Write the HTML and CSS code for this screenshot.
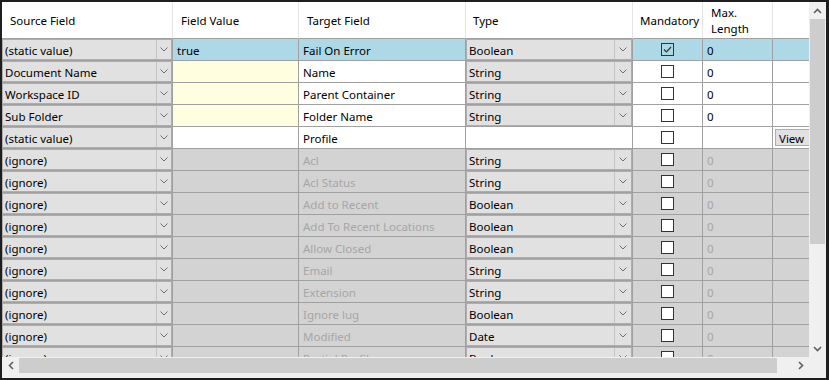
FILE: index.html
```html
<!DOCTYPE html>
<html lang="en">
<head>
  <meta charset="UTF-8">
  <title>Field Mapping</title>
  <link rel="stylesheet" href="styles.css">
</head>
<body>
  <div class="frame">
    <!-- grid area -->
    <div class="viewport">
      <div class="row head">
        <div class="cell">Source Field</div>
        <div class="cell">Field Value</div>
        <div class="cell">Target Field</div>
        <div class="cell">Type</div>
        <div class="cell">Mandatory</div>
        <div class="cell two-lines">Max.<br>Length</div>
        <div class="cell"></div>
      </div>

      <div class="row selected">
        <div class="cell combo-cell"><div class="combo"><span class="val">(static value)</span><span class="btn"><svg width="8" height="5"><polyline points="0.5,0.5 4,4 7.5,0.5"/></svg></span></div></div>
        <div class="cell">true</div>
        <div class="cell">Fail On Error</div>
        <div class="cell combo-cell"><div class="combo"><span class="val">Boolean</span><span class="btn"><svg width="8" height="5"><polyline points="0.5,0.5 4,4 7.5,0.5"/></svg></span></div></div>
        <div class="cell check-cell"><span class="check on"><svg width="11" height="11"><polyline points="2,5.5 4.5,8 9,3"/></svg></span></div>
        <div class="cell">0</div>
        <div class="cell"></div>
      </div>

      <div class="row">
        <div class="cell combo-cell"><div class="combo"><span class="val">Document Name</span><span class="btn"><svg width="8" height="5"><polyline points="0.5,0.5 4,4 7.5,0.5"/></svg></span></div></div>
        <div class="cell value-cell"></div>
        <div class="cell">Name</div>
        <div class="cell combo-cell"><div class="combo"><span class="val">String</span><span class="btn"><svg width="8" height="5"><polyline points="0.5,0.5 4,4 7.5,0.5"/></svg></span></div></div>
        <div class="cell check-cell"><span class="check"></span></div>
        <div class="cell">0</div>
        <div class="cell"></div>
      </div>

      <div class="row">
        <div class="cell combo-cell"><div class="combo"><span class="val">Workspace ID</span><span class="btn"><svg width="8" height="5"><polyline points="0.5,0.5 4,4 7.5,0.5"/></svg></span></div></div>
        <div class="cell value-cell"></div>
        <div class="cell">Parent Container</div>
        <div class="cell combo-cell"><div class="combo"><span class="val">String</span><span class="btn"><svg width="8" height="5"><polyline points="0.5,0.5 4,4 7.5,0.5"/></svg></span></div></div>
        <div class="cell check-cell"><span class="check"></span></div>
        <div class="cell">0</div>
        <div class="cell"></div>
      </div>

      <div class="row">
        <div class="cell combo-cell"><div class="combo"><span class="val">Sub Folder</span><span class="btn"><svg width="8" height="5"><polyline points="0.5,0.5 4,4 7.5,0.5"/></svg></span></div></div>
        <div class="cell value-cell"></div>
        <div class="cell">Folder Name</div>
        <div class="cell combo-cell"><div class="combo"><span class="val">String</span><span class="btn"><svg width="8" height="5"><polyline points="0.5,0.5 4,4 7.5,0.5"/></svg></span></div></div>
        <div class="cell check-cell"><span class="check"></span></div>
        <div class="cell">0</div>
        <div class="cell"></div>
      </div>

      <div class="row">
        <div class="cell combo-cell"><div class="combo"><span class="val">(static value)</span><span class="btn"><svg width="8" height="5"><polyline points="0.5,0.5 4,4 7.5,0.5"/></svg></span></div></div>
        <div class="cell"></div>
        <div class="cell">Profile</div>
        <div class="cell"></div>
        <div class="cell check-cell"><span class="check"></span></div>
        <div class="cell"></div>
        <div class="cell button-cell"><span class="view-btn">View</span></div>
      </div>

      <div class="row off">
        <div class="cell combo-cell"><div class="combo"><span class="val">(ignore)</span><span class="btn"><svg width="8" height="5"><polyline points="0.5,0.5 4,4 7.5,0.5"/></svg></span></div></div>
        <div class="cell"></div>
        <div class="cell">Acl</div>
        <div class="cell combo-cell"><div class="combo"><span class="val">String</span><span class="btn"><svg width="8" height="5"><polyline points="0.5,0.5 4,4 7.5,0.5"/></svg></span></div></div>
        <div class="cell check-cell"><span class="check"></span></div>
        <div class="cell">0</div>
        <div class="cell"></div>
      </div>

      <div class="row off">
        <div class="cell combo-cell"><div class="combo"><span class="val">(ignore)</span><span class="btn"><svg width="8" height="5"><polyline points="0.5,0.5 4,4 7.5,0.5"/></svg></span></div></div>
        <div class="cell"></div>
        <div class="cell">Acl Status</div>
        <div class="cell combo-cell"><div class="combo"><span class="val">String</span><span class="btn"><svg width="8" height="5"><polyline points="0.5,0.5 4,4 7.5,0.5"/></svg></span></div></div>
        <div class="cell check-cell"><span class="check"></span></div>
        <div class="cell">0</div>
        <div class="cell"></div>
      </div>

      <div class="row off">
        <div class="cell combo-cell"><div class="combo"><span class="val">(ignore)</span><span class="btn"><svg width="8" height="5"><polyline points="0.5,0.5 4,4 7.5,0.5"/></svg></span></div></div>
        <div class="cell"></div>
        <div class="cell">Add to Recent</div>
        <div class="cell combo-cell"><div class="combo"><span class="val">Boolean</span><span class="btn"><svg width="8" height="5"><polyline points="0.5,0.5 4,4 7.5,0.5"/></svg></span></div></div>
        <div class="cell check-cell"><span class="check"></span></div>
        <div class="cell">0</div>
        <div class="cell"></div>
      </div>

      <div class="row off">
        <div class="cell combo-cell"><div class="combo"><span class="val">(ignore)</span><span class="btn"><svg width="8" height="5"><polyline points="0.5,0.5 4,4 7.5,0.5"/></svg></span></div></div>
        <div class="cell"></div>
        <div class="cell">Add To Recent Locations</div>
        <div class="cell combo-cell"><div class="combo"><span class="val">Boolean</span><span class="btn"><svg width="8" height="5"><polyline points="0.5,0.5 4,4 7.5,0.5"/></svg></span></div></div>
        <div class="cell check-cell"><span class="check"></span></div>
        <div class="cell">0</div>
        <div class="cell"></div>
      </div>

      <div class="row off">
        <div class="cell combo-cell"><div class="combo"><span class="val">(ignore)</span><span class="btn"><svg width="8" height="5"><polyline points="0.5,0.5 4,4 7.5,0.5"/></svg></span></div></div>
        <div class="cell"></div>
        <div class="cell">Allow Closed</div>
        <div class="cell combo-cell"><div class="combo"><span class="val">Boolean</span><span class="btn"><svg width="8" height="5"><polyline points="0.5,0.5 4,4 7.5,0.5"/></svg></span></div></div>
        <div class="cell check-cell"><span class="check"></span></div>
        <div class="cell">0</div>
        <div class="cell"></div>
      </div>

      <div class="row off">
        <div class="cell combo-cell"><div class="combo"><span class="val">(ignore)</span><span class="btn"><svg width="8" height="5"><polyline points="0.5,0.5 4,4 7.5,0.5"/></svg></span></div></div>
        <div class="cell"></div>
        <div class="cell">Email</div>
        <div class="cell combo-cell"><div class="combo"><span class="val">String</span><span class="btn"><svg width="8" height="5"><polyline points="0.5,0.5 4,4 7.5,0.5"/></svg></span></div></div>
        <div class="cell check-cell"><span class="check"></span></div>
        <div class="cell">0</div>
        <div class="cell"></div>
      </div>

      <div class="row off">
        <div class="cell combo-cell"><div class="combo"><span class="val">(ignore)</span><span class="btn"><svg width="8" height="5"><polyline points="0.5,0.5 4,4 7.5,0.5"/></svg></span></div></div>
        <div class="cell"></div>
        <div class="cell">Extension</div>
        <div class="cell combo-cell"><div class="combo"><span class="val">String</span><span class="btn"><svg width="8" height="5"><polyline points="0.5,0.5 4,4 7.5,0.5"/></svg></span></div></div>
        <div class="cell check-cell"><span class="check"></span></div>
        <div class="cell">0</div>
        <div class="cell"></div>
      </div>

      <div class="row off">
        <div class="cell combo-cell"><div class="combo"><span class="val">(ignore)</span><span class="btn"><svg width="8" height="5"><polyline points="0.5,0.5 4,4 7.5,0.5"/></svg></span></div></div>
        <div class="cell"></div>
        <div class="cell">Ignore lug</div>
        <div class="cell combo-cell"><div class="combo"><span class="val">Boolean</span><span class="btn"><svg width="8" height="5"><polyline points="0.5,0.5 4,4 7.5,0.5"/></svg></span></div></div>
        <div class="cell check-cell"><span class="check"></span></div>
        <div class="cell">0</div>
        <div class="cell"></div>
      </div>

      <div class="row off">
        <div class="cell combo-cell"><div class="combo"><span class="val">(ignore)</span><span class="btn"><svg width="8" height="5"><polyline points="0.5,0.5 4,4 7.5,0.5"/></svg></span></div></div>
        <div class="cell"></div>
        <div class="cell">Modified</div>
        <div class="cell combo-cell"><div class="combo"><span class="val">Date</span><span class="btn"><svg width="8" height="5"><polyline points="0.5,0.5 4,4 7.5,0.5"/></svg></span></div></div>
        <div class="cell check-cell"><span class="check"></span></div>
        <div class="cell">0</div>
        <div class="cell"></div>
      </div>

      <div class="row off">
        <div class="cell combo-cell"><div class="combo"><span class="val">(ignore)</span><span class="btn"><svg width="8" height="5"><polyline points="0.5,0.5 4,4 7.5,0.5"/></svg></span></div></div>
        <div class="cell"></div>
        <div class="cell">Partial Profile</div>
        <div class="cell combo-cell"><div class="combo"><span class="val">Boolean</span><span class="btn"><svg width="8" height="5"><polyline points="0.5,0.5 4,4 7.5,0.5"/></svg></span></div></div>
        <div class="cell check-cell"><span class="check"></span></div>
        <div class="cell">0</div>
        <div class="cell"></div>
      </div>
    </div>

    <!-- vertical scrollbar -->
    <div class="vscroll">
      <span class="arrow"><svg width="9" height="6"><polyline points="1,5 4.5,1.5 8,5"/></svg></span>
      <span class="track"><span class="thumb"></span></span>
      <span class="arrow"><svg width="9" height="6"><polyline points="1,1 4.5,4.5 8,1"/></svg></span>
    </div>

    <!-- horizontal scrollbar -->
    <div class="hscroll">
      <span class="arrow"><svg width="6" height="9"><polyline points="5,1 1.5,4.5 5,8"/></svg></span>
      <span class="track"><span class="thumb"></span></span>
      <span class="arrow"><svg width="6" height="9"><polyline points="1,1 4.5,4.5 1,8"/></svg></span>
    </div>
    <div class="corner"></div>
  </div>
</body>
</html>
```

FILE: styles.css
```css
* {
  margin: 0;
  padding: 0;
  box-sizing: border-box;
}
body {
  background: #f0f0f0;
  font-family: 'Noto Sans', 'Open Sans', sans-serif;
  font-size: 11.5px;
  color: #000;
}

/* outer control with its two scrollbars */
.frame {
  width: 829px;
  height: 380px;
  border-style: solid;
  border-color: #1e1e1e;
  border-width: 2px 3px 2px 2px;
  padding-bottom: 4px;
  background: #f0f0f0;
  display: grid;
  grid-template-columns: 807px 17px;
  grid-template-rows: 355px 17px;
}
.viewport {
  background: #fff;
  overflow: hidden;
}

/* rows and cells */
.row {
  display: grid;
  grid-template-columns: 171px 126px 167px 167px 70px 70px 100px;
  height: 22px;
}
.cell {
  border-right: 1px solid #a0a0a0;
  border-bottom: 1px solid #a0a0a0;
  padding-left: 4px;
  padding-top: 1px;
  display: flex;
  align-items: center;
  white-space: nowrap;
  overflow: hidden;
}
.row.head {
  height: 37px;
}
.head .cell {
  padding-left: 8px;
  border-right-color: #e5e5e5;
}
.head .cell:nth-child(4),
.head .cell:nth-child(5) {
  padding-left: 7px;
}
.head .two-lines {
  line-height: 16px;
  padding-top: 2px;
}

.selected .cell {
  background: #add8e6;
}
.value-cell {
  background: #ffffe0;
}
.off .cell {
  background: #d3d3d3;
  color: #a6a6a6;
}

/* dropdown cells */
.combo-cell {
  padding-left: 0;
  padding-top: 0;
  align-items: stretch;
}
.row .combo-cell {
  background: #e1e1e1;
}
.combo {
  flex: 1;
  display: flex;
  border: 1px solid #adadad;
  background: #e1e1e1;
  color: #000;
}
.combo .val {
  flex: 1;
  padding-left: 2px;
  padding-top: 1px;
  display: flex;
  align-items: center;
}
.combo .btn {
  width: 15px;
  border-left: 1px solid #c4c4c4;
  display: flex;
  align-items: center;
  justify-content: center;
}
.combo-cell:nth-child(4) .btn {
  width: 17px;
}
.combo svg polyline {
  fill: none;
  stroke: #707070;
  stroke-width: 1;
}

/* mandatory checkbox */
.check-cell {
  justify-content: center;
  padding-left: 0;
  padding-top: 0;
}
.check {
  width: 13px;
  height: 13px;
  border: 1px solid #333;
  background: #fff;
  display: flex;
}
.check.on {
  background: transparent;
}
.check svg polyline {
  fill: none;
  stroke: #333;
  stroke-width: 1.2;
}

.button-cell {
  padding-left: 2px;
  padding-top: 0;
}
.view-btn {
  height: 17px;
  padding: 1px 8px 0 3px;
  border: 1px solid #adadad;
  background: #e1e1e1;
  color: #000;
  display: flex;
  align-items: center;
}

/* scrollbars */
.vscroll,
.hscroll {
  display: flex;
  background: #f0f0f0;
}
.vscroll {
  flex-direction: column;
}
.arrow {
  width: 17px;
  height: 17px;
  display: flex;
  align-items: center;
  justify-content: center;
  flex: none;
}
.arrow svg polyline {
  fill: none;
  stroke: #606060;
  stroke-width: 1.6;
}
.track {
  flex: 1;
  display: flex;
}
.vscroll .track {
  flex-direction: column;
}
.vscroll .thumb {
  height: 225px;
  margin: 0 1px;
  background: #cdcdcd;
}
.hscroll .thumb {
  width: 758px;
  margin: 1px 0;
  background: #cdcdcd;
}
.corner {
  background: #f0f0f0;
}
```
